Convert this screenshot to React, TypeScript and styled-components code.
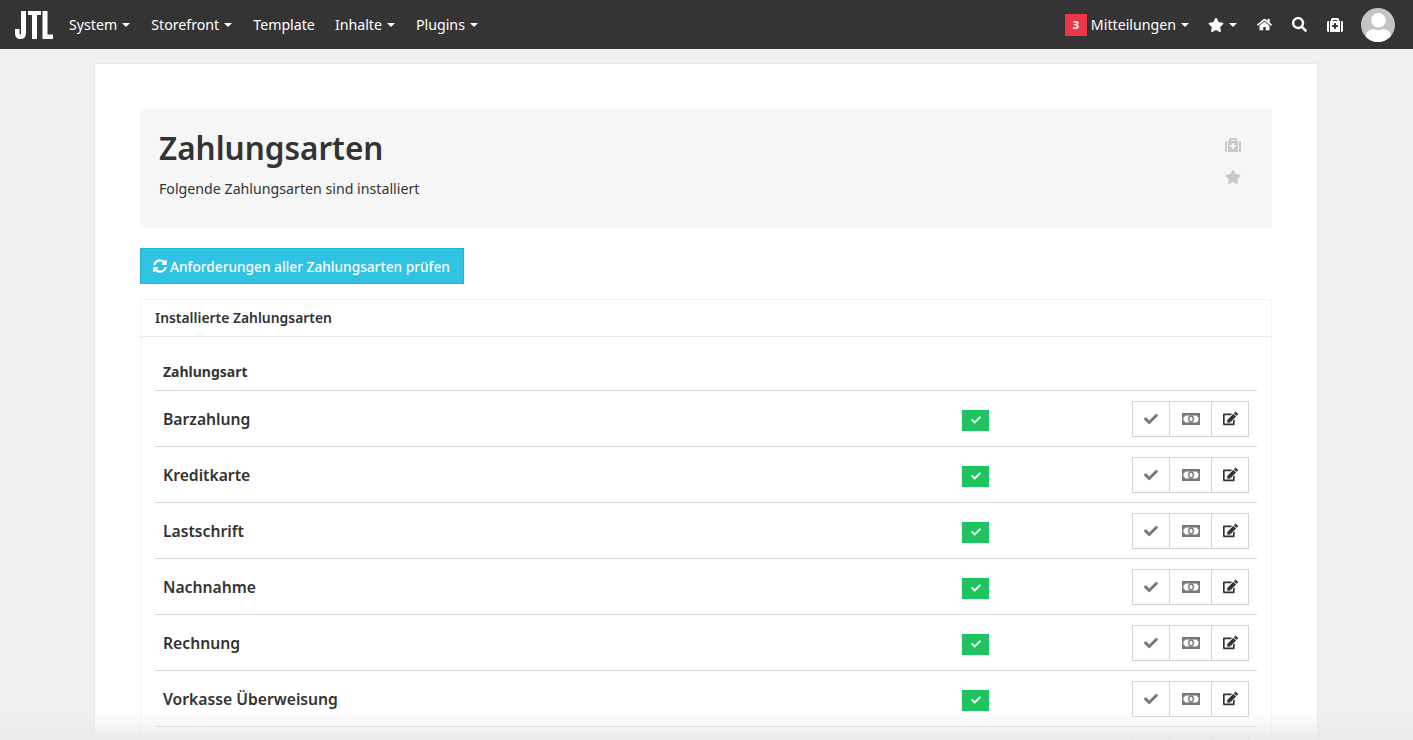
import styled, { createGlobalStyle } from "styled-components";
import { FaCheck, FaEdit, FaHome, FaMedkit, FaSearch, FaStar, FaSyncAlt, FaUser } from "react-icons/fa";

const GlobalStyle = createGlobalStyle`
  html, body {
    margin: 0;
    height: 740px;
    overflow: hidden;
    background: #f0f0f0;
    font-family: "Noto Sans", "Open Sans", sans-serif;
    color: #333;
  }
  * { box-sizing: border-box; }
`;

const TopBar = styled.header`
  display: flex;
  align-items: center;
  height: 49px;
  padding: 0 18px 0 15px;
  background: #343434;
  color: #fff;
`;

const Logo = styled.svg`
  width: 38px;
  height: 28px;
  margin-right: 16px;
  margin-top: 1px;
`;

const NavItem = styled.span<{ $gap?: number }>`
  display: inline-flex;
  align-items: center;
  margin-right: ${props => props.$gap ?? 20}px;
  font-size: 14.2px;
  white-space: nowrap;
`;

const Caret = styled.i`
  display: inline-block;
  width: 0;
  height: 0;
  margin: 0 1px 0 5px;
  border-top: 4px solid #fff;
  border-left: 4px solid transparent;
  border-right: 4px solid transparent;
`;

const Spacer = styled.div`
  flex: 1;
`;

const CountBadge = styled.span`
  display: inline-flex;
  align-items: center;
  justify-content: center;
  width: 22px;
  height: 22px;
  margin-right: 4px;
  background: #ef3648;
  font-size: 11px;
  font-weight: 700;
`;

const Avatar = styled.span`
  display: flex;
  align-items: flex-end;
  justify-content: center;
  width: 34px;
  height: 34px;
  border-radius: 50%;
  overflow: hidden;
  background: #c4c4c4;
  color: #fff;
  font-size: 29px;
  line-height: 0;
`;

const Page = styled.main`
  width: 1224px;
  margin: 14px 0 0 94px;
  padding: 45px 45px 0;
  background: #fff;
  border: 1px solid #e9e9e9;
`;

const Heading = styled.section`
  display: flex;
  justify-content: space-between;
  height: 119px;
  padding: 17px 31px 0 19px;
  background: #f6f6f6;
`;

const Title = styled.h1`
  margin: 0;
  font-size: 31.5px;
  line-height: 44px;
  font-weight: 600;
  color: #333;
`;

const Subtitle = styled.p`
  margin: 9px 0 0;
  font-size: 14.2px;
  line-height: 20px;
`;

const HeadingIcons = styled.div`
  display: flex;
  flex-direction: column;
  align-items: center;
  gap: 16px;
  padding-top: 11px;
  color: #c8c8c8;
  font-size: 16px;
`;

const CheckAll = styled.button`
  display: flex;
  align-items: center;
  gap: 3px;
  width: 324px;
  height: 36px;
  margin-top: 20px;
  padding: 0 12px;
  background: #31c3e3;
  border: 1px solid #1fb5d5;
  color: #fff;
  font-family: inherit;
  font-size: 13.7px;
  font-weight: 500;
  white-space: nowrap;

  svg {
    flex-shrink: 0;
  }
`;

const Panel = styled.section`
  margin-top: 15px;
  border: 1px solid #f3f3f3;
  border-bottom: 0;
`;

const PanelHead = styled.h2`
  height: 37px;
  margin: 0;
  padding: 0 14px;
  border-bottom: 1px solid #ececec;
  font-size: 13.9px;
  line-height: 36px;
  font-weight: 600;
`;

const PanelBody = styled.div`
  padding: 17px 14px 0 14px;
`;

const TableHead = styled.div`
  height: 37px;
  padding: 0 8px;
  border-bottom: 1px solid #d8d8d8;
  font-size: 14px;
  line-height: 35px;
  font-weight: 700;
`;

const Row = styled.div`
  display: grid;
  grid-template-columns: 1fr 27px 144px 117px 7px;
  align-items: center;
  height: 56px;
  padding-left: 8px;
  border-bottom: 1px solid #d8d8d8;
`;

const Name = styled.span`
  font-size: 15.7px;
  font-weight: 600;
`;

const Status = styled.span`
  display: flex;
  align-items: center;
  justify-content: center;
  grid-column: 2;
  height: 21px;
  margin-top: 3px;
  background: #1fc45e;
  color: #fff;
  font-size: 10px;
`;

const Actions = styled.div`
  display: flex;
  grid-column: 4;
  height: 36px;
`;

const Action = styled.span<{ $width: number; $muted?: boolean }>`
  display: flex;
  align-items: center;
  justify-content: center;
  width: ${props => props.$width}px;
  margin-left: -1px;
  border: 1px solid #d4d4d4;
  color: ${props => (props.$muted ? "#777" : "#333")};
  font-size: 14px;
`;

const BottomFade = styled.div`
  position: fixed;
  left: 0;
  right: 0;
  bottom: 0;
  height: 28px;
  background: linear-gradient(to bottom, rgba(232, 232, 232, 0), rgba(232, 232, 232, 0.85));
  pointer-events: none;
`;

const payments = ["Barzahlung", "Kreditkarte", "Lastschrift", "Nachnahme", "Rechnung", "Vorkasse Überweisung", ""];

const BillIcon = () => (
  <svg width="18" height="12" viewBox="0 0 18 12">
    <path fill="currentColor" fillRule="evenodd" d="M0 0h18v12H0zM3 2.500Q3 4 1.500 4v4Q3 8 3 9.500h12Q15 8 16.500 8V4Q15 4 15 2.500z" />
    <ellipse cx="9" cy="6" rx="2.300" ry="3" fill="none" stroke="currentColor" strokeWidth="1.300" />
  </svg>
);

export default function App() {
  return (
    <>
      <GlobalStyle />
      <TopBar>
        <Logo viewBox="0 0 38 28" fill="#fff" aria-label="JTL">
          <path d="M6 0h5v22q0 6-5.500 6T0 22v-4h4.500v4q0 1.500 .8 1.500T6 22z" />
          <path d="M13 0h13v4h-4v24h-5V4h-4z" />
          <path d="M27.500 0h5v23.500H38V28H27.500z" />
        </Logo>
        <NavItem>System<Caret /></NavItem>
        <NavItem>Storefront<Caret /></NavItem>
        <NavItem>Template</NavItem>
        <NavItem>Inhalte<Caret /></NavItem>
        <NavItem>Plugins<Caret /></NavItem>
        <Spacer />
        <NavItem $gap={18}><CountBadge>3</CountBadge>Mitteilungen<Caret /></NavItem>
        <NavItem $gap={19}><FaStar size={16} /><Caret /></NavItem>
        <NavItem $gap={20}><FaHome size={15} /></NavItem>
        <NavItem $gap={20}><FaSearch size={15} /></NavItem>
        <NavItem $gap={18}><FaMedkit size={16} /></NavItem>
        <Avatar><FaUser /></Avatar>
      </TopBar>
      <Page>
        <Heading>
          <div>
            <Title>Zahlungsarten</Title>
            <Subtitle>Folgende Zahlungsarten sind installiert</Subtitle>
          </div>
          <HeadingIcons>
            <FaMedkit />
            <FaStar />
          </HeadingIcons>
        </Heading>
        <CheckAll><FaSyncAlt size={14} /> Anforderungen aller Zahlungsarten prüfen</CheckAll>
        <Panel>
          <PanelHead>Installierte Zahlungsarten</PanelHead>
          <PanelBody>
            <TableHead>Zahlungsart</TableHead>
            {payments.map((name, index) => (
              <Row key={index}>
                <Name>{name}</Name>
                <Status><FaCheck /></Status>
                <Actions>
                  <Action $width={38} $muted><FaCheck /></Action>
                  <Action $width={43} $muted><BillIcon /></Action>
                  <Action $width={38}><FaEdit size={15} /></Action>
                </Actions>
              </Row>
            ))}
          </PanelBody>
        </Panel>
      </Page>
      <BottomFade />
    </>
  );
}
